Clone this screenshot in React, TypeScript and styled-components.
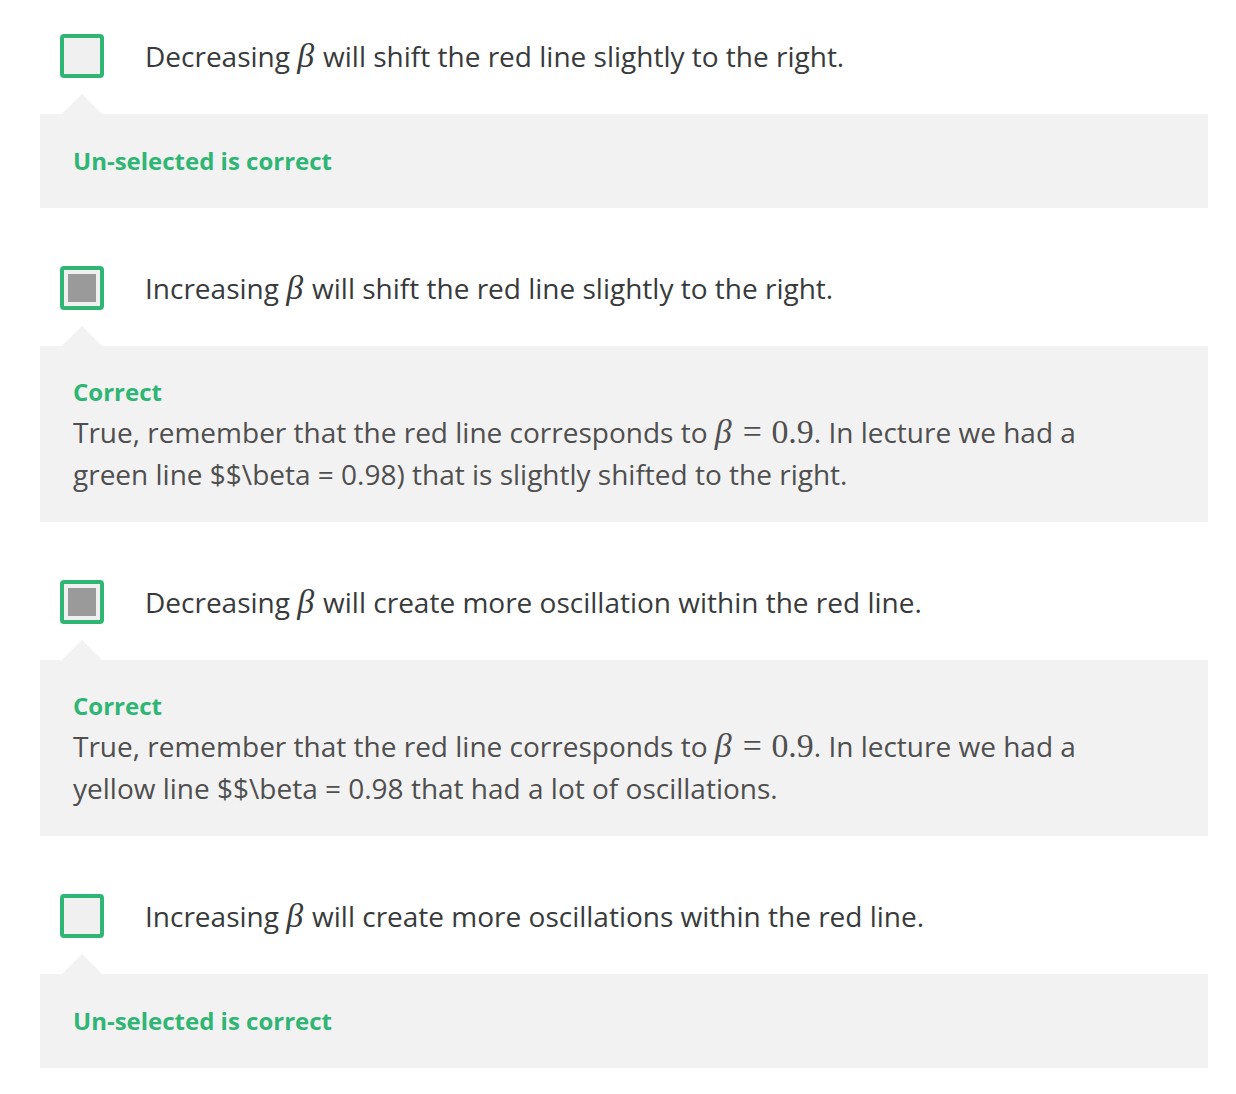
import React from "react";
import styled, { createGlobalStyle } from "styled-components";

const Global = createGlobalStyle`
  html, body { margin: 0; padding: 0; background: #ffffff; }
  body { font-family: "Open Sans", "Noto Sans", sans-serif; }
`;

const Page = styled.div`
  padding: 34px 28px 26px 40px;
  display: flex;
  flex-direction: column;
  gap: 58px;
`;

const Item = styled.div`
  display: flex;
  flex-direction: column;
`;

const OptionRow = styled.div`
  display: flex;
  align-items: center;
  gap: 41px;
  padding-left: 20px;
  height: 44px;
`;

const Box = styled.div<{ $checked: boolean }>`
  box-sizing: border-box;
  width: 44px;
  height: 44px;
  flex: none;
  border: 4px solid #2fb574;
  border-radius: 4px;
  background: #f0f0f0;
  padding: 4px;
  display: flex;
  &::after {
    content: "";
    flex: 1;
    background: ${(p) => (p.$checked ? "#9a9a9a" : "transparent")};
  }
`;

const OptionText = styled.div`
  font-size: 28px;
  line-height: 40px;
  color: #383a3c;
`;

const Math = styled.span`
  font-family: "Liberation Serif", "DejaVu Serif", serif;
  font-size: 1.21em;
  line-height: 1;
`;

const MathI = styled.i`
  font-style: italic;
  padding-right: 0.05em;
`;

const Rel = styled.span`
  margin: 0 0.28em;
`;

const Feedback = styled.div<{ $solo: boolean }>`
  position: relative;
  margin-top: 36px;
  background: #f2f2f2;
  padding: ${(p) => (p.$solo ? "28px" : "27px")} 32px ${(p) => (p.$solo ? "28px" : "27px")} 33px;
  &::before {
    content: "";
    position: absolute;
    left: 22px;
    top: -20px;
    border-left: 20px solid transparent;
    border-right: 20px solid transparent;
    border-bottom: 20px solid #f2f2f2;
  }
`;

const Verdict = styled.div`
  font-size: 24px;
  line-height: 38px;
  font-weight: 700;
  color: #2fb574;
`;

const Explanation = styled.div`
  font-size: 28px;
  line-height: 42px;
  color: #4f4f4f;
  max-width: 1040px;
`;

const Beta = () => (
  <Math>
    <MathI>β</MathI>
  </Math>
);

const BetaEq = () => (
  <Math>
    <MathI>β</MathI>
    <Rel>=</Rel>0.9
  </Math>
);

type Q = {
  checked: boolean;
  pre: string;
  post: string;
  verdict: string;
  explanation?: React.ReactNode;
};

const items: Q[] = [
  {
    checked: false,
    pre: "Decreasing",
    post: "will shift the red line slightly to the right.",
    verdict: "Un-selected is correct",
  },
  {
    checked: true,
    pre: "Increasing",
    post: "will shift the red line slightly to the right.",
    verdict: "Correct",
    explanation: (
      <>
        True, remember that the red line corresponds to <BetaEq />. In lecture we had a green line $$\beta = 0.98) that is slightly shifted to the right.
      </>
    ),
  },
  {
    checked: true,
    pre: "Decreasing",
    post: "will create more oscillation within the red line.",
    verdict: "Correct",
    explanation: (
      <>
        True, remember that the red line corresponds to <BetaEq />. In lecture we had a yellow line $$\beta = 0.98 that had a lot of oscillations.
      </>
    ),
  },
  {
    checked: false,
    pre: "Increasing",
    post: "will create more oscillations within the red line.",
    verdict: "Un-selected is correct",
  },
];

export default function App() {
  return (
    <>
      <Global />
      <Page>
        {items.map((q, i) => (
          <Item key={i}>
            <OptionRow>
              <Box $checked={q.checked} />
              <OptionText>
                {q.pre} <Beta /> {q.post}
              </OptionText>
            </OptionRow>
            <Feedback $solo={!q.explanation}>
              <Verdict>{q.verdict}</Verdict>
              {q.explanation && <Explanation>{q.explanation}</Explanation>}
            </Feedback>
          </Item>
        ))}
      </Page>
    </>
  );
}
